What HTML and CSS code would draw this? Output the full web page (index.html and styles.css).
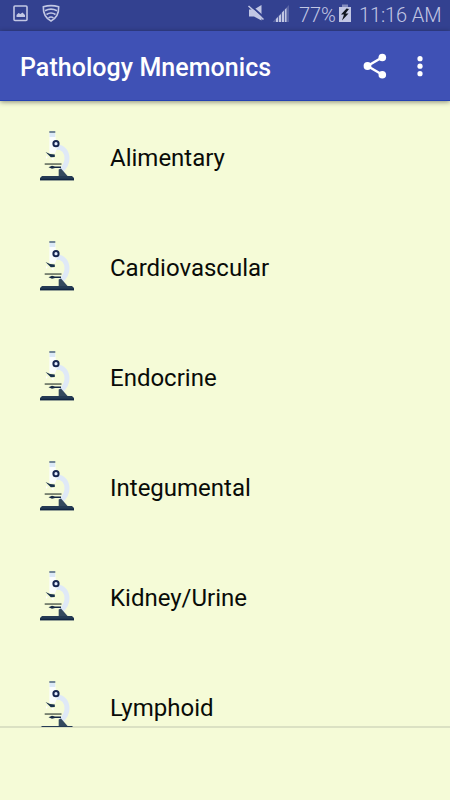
FILE: index.html
```html
<!DOCTYPE html>
<html lang="en">
<head>
<meta charset="utf-8">
<title>Pathology Mnemonics</title>
<link rel="stylesheet" href="styles.css">
</head>
<body>
<svg class="defs" aria-hidden="true">
  <symbol id="scope" viewBox="0 0 36 52">
    <path d="M17 17C25 17 28 22.500 28 28.500C28 34 25 38 21.500 41" fill="none" stroke="#dfe9f7" stroke-width="5"/>
    <path d="M10.500 3h5.700l.8 8.500 2 4-3 8-5.700-.5z" fill="#fbfdfd"/>
    <path d="M10.500 3h5.700v4h-5.700z" fill="#dce9f8"/>
    <path d="M10.300 1.200h6v1.600h-6z" fill="#536b88"/>
    <circle cx="17" cy="13.700" r="2.600" fill="#e4ecff" stroke="#17254f" stroke-width="2"/>
    <path d="M6.500 22l4.500 2 4.800.5v2.500l-4 .2z" fill="#18304a"/>
    <path d="M7 26l2 1-2 2zM12 28h2.500v3z" fill="#fff"/>
    <path d="M5.700 33.300h16.800v1.500H5.700z" fill="#5b6658"/>
    <path d="M9.500 37.300l3.500-1.600 3 .9h6v1.300h-6l-3 .9z" fill="#152945"/>
    <path d="M19.700 39.500l2.300-1 7 8h-9.300z" fill="#34495e"/>
    <path d="M3 46h30l2 2v2.200H1V48z" fill="#253b55"/>
    <path d="M1 48.700h34v1.500H1z" fill="#112542"/>
  </symbol>
</svg>
<div class="status">
  <svg class="left" viewBox="0 0 70 31">
    <rect x="14" y="6" width="13" height="14.500" rx="1" fill="none" stroke="#c2c7e4" stroke-width="1.600"/>
    <path d="M16.500 17v-2l2-2 2 1 2-1.500 2.500 2.500v2z" fill="#c2c7e4"/>
    <g fill="none" stroke="#c2c7e4" stroke-width="1.600">
      <path d="M43.300 6.800Q51 4.500 58.700 6.800Q59 17 51 21Q43 17 43.300 6.800z"/>
      <path d="M45 10.700Q51 7.500 57 10.700M46.500 14.500Q51 11.500 55.500 14.500M48.500 18Q51 16 53.500 18"/>
    </g>
  </svg>
  <svg class="signals" viewBox="0 0 52 31">
    <path d="M2 9.500h5l7.500-4.500v15.500L7 16.500H2z" fill="#c2c7e4"/>
    <path d="M2.500 4.500l15 13.500" stroke="#334190" stroke-width="2"/>
    <path d="M1.500 6l15 13.500" stroke="#c2c7e4" stroke-width="1.600"/>
    <path d="M26 21.500L42 5v17H26z" fill="#5964a5"/>
    <path d="M29 19l2-2v5h-2zM32 16l2-2v8h-2zM35 12.500l2-2V22h-2zM38 9.500l1.500-1.500v14H38z" fill="#c2c7e4"/>
  </svg>
  <span class="percent">77%</span>
  <svg class="battery" viewBox="0 0 14 31">
    <path d="M4 4.500h6v3H4z" fill="#858dbe"/>
    <path d="M1 7h12v15H1z" fill="#c2c7e4"/>
    <path d="M8.500 8.500L3 14.500h3L4 20.500l6.500-7H7.500L11 9z" fill="#101620"/>
  </svg>
  <span class="time">11:16 AM</span>
</div>
<header class="bar">
  <h1 class="title">Pathology Mnemonics</h1>
  <svg class="share" viewBox="0 0 24 26" fill="#fff">
    <path d="M19 4.500L4.500 13L19 21.500" fill="none" stroke="#fff" stroke-width="2.400"/>
    <circle cx="19.300" cy="4.500" r="3.800"/><circle cx="4.500" cy="13" r="3.900"/><circle cx="19.300" cy="21.700" r="3.800"/>
  </svg>
  <svg class="more" viewBox="0 0 8 26" fill="#fff">
    <circle cx="4" cy="5.700" r="2.600"/><circle cx="4" cy="13.200" r="2.600"/><circle cx="4" cy="20.700" r="2.600"/>
  </svg>
</header>
<ul class="list">
  <li class="row"><svg class="scope"><use href="#scope"/></svg><span>Alimentary</span></li>
  <li class="row"><svg class="scope"><use href="#scope"/></svg><span>Cardiovascular</span></li>
  <li class="row"><svg class="scope"><use href="#scope"/></svg><span>Endocrine</span></li>
  <li class="row"><svg class="scope"><use href="#scope"/></svg><span>Integumental</span></li>
  <li class="row"><svg class="scope"><use href="#scope"/></svg><span>Kidney/Urine</span></li>
  <li class="row"><svg class="scope"><use href="#scope"/></svg><span>Lymphoid</span></li>
</ul>
<footer class="foot"></footer>
</body>
</html>
```
FILE: styles.css
```css
* { box-sizing: border-box; }
body {
  margin: 0;
  height: 800px;
  display: flex;
  flex-direction: column;
  overflow: hidden;
  background: #f5fbd7;
  font-family: Roboto, sans-serif;
}
.defs { display: none; }
svg { display: block; flex: none; }
.status {
  height: 31px;
  flex: none;
  display: flex;
  align-items: center;
  background: #334190;
  color: #c2c7e4;
  font-size: 20px;
  line-height: 31px;
  font-weight: 300;
  white-space: nowrap;
}
.left { width: 70px; height: 31px; }
.signals { width: 52px; height: 31px; margin-left: 177px; }
.percent { width: 39px; letter-spacing: -.1px; }
.battery { width: 14px; height: 31px; }
.time { margin-left: 7px; letter-spacing: -.1px; }
.bar {
  height: 70px;
  flex: none;
  display: flex;
  align-items: center;
  padding-left: 20px;
  background: #3f51b5;
  border-bottom: 1px solid #2442b2;
  box-shadow: 0 1px 5px rgba(0, 0, 0, .45);
  z-index: 2;
}
.title {
  margin: 4px 0 0;
  width: 343px;
  color: #fff;
  font-size: 25px;
  letter-spacing: .05px;
  line-height: 30px;
  font-weight: 500;
  white-space: nowrap;
}
.share { width: 24px; height: 26px; }
.more { width: 8px; height: 26px; margin-left: 29px; }
.list {
  margin: 0;
  padding: 0;
  list-style: none;
  height: 626px;
  flex: none;
  overflow: hidden;
  z-index: 1;
}
.row {
  height: 110px;
  display: flex;
  align-items: center;
  padding-left: 39px;
  color: #090b08;
  font-size: 24px;
  line-height: 32px;
}
.row span { margin-top: 3px; }
.scope { width: 36px; height: 52px; margin-right: 35px; }
.foot {
  flex: 1;
  margin-top: -1px;
  border-top: 2px solid #dbe1c3;
}
```
